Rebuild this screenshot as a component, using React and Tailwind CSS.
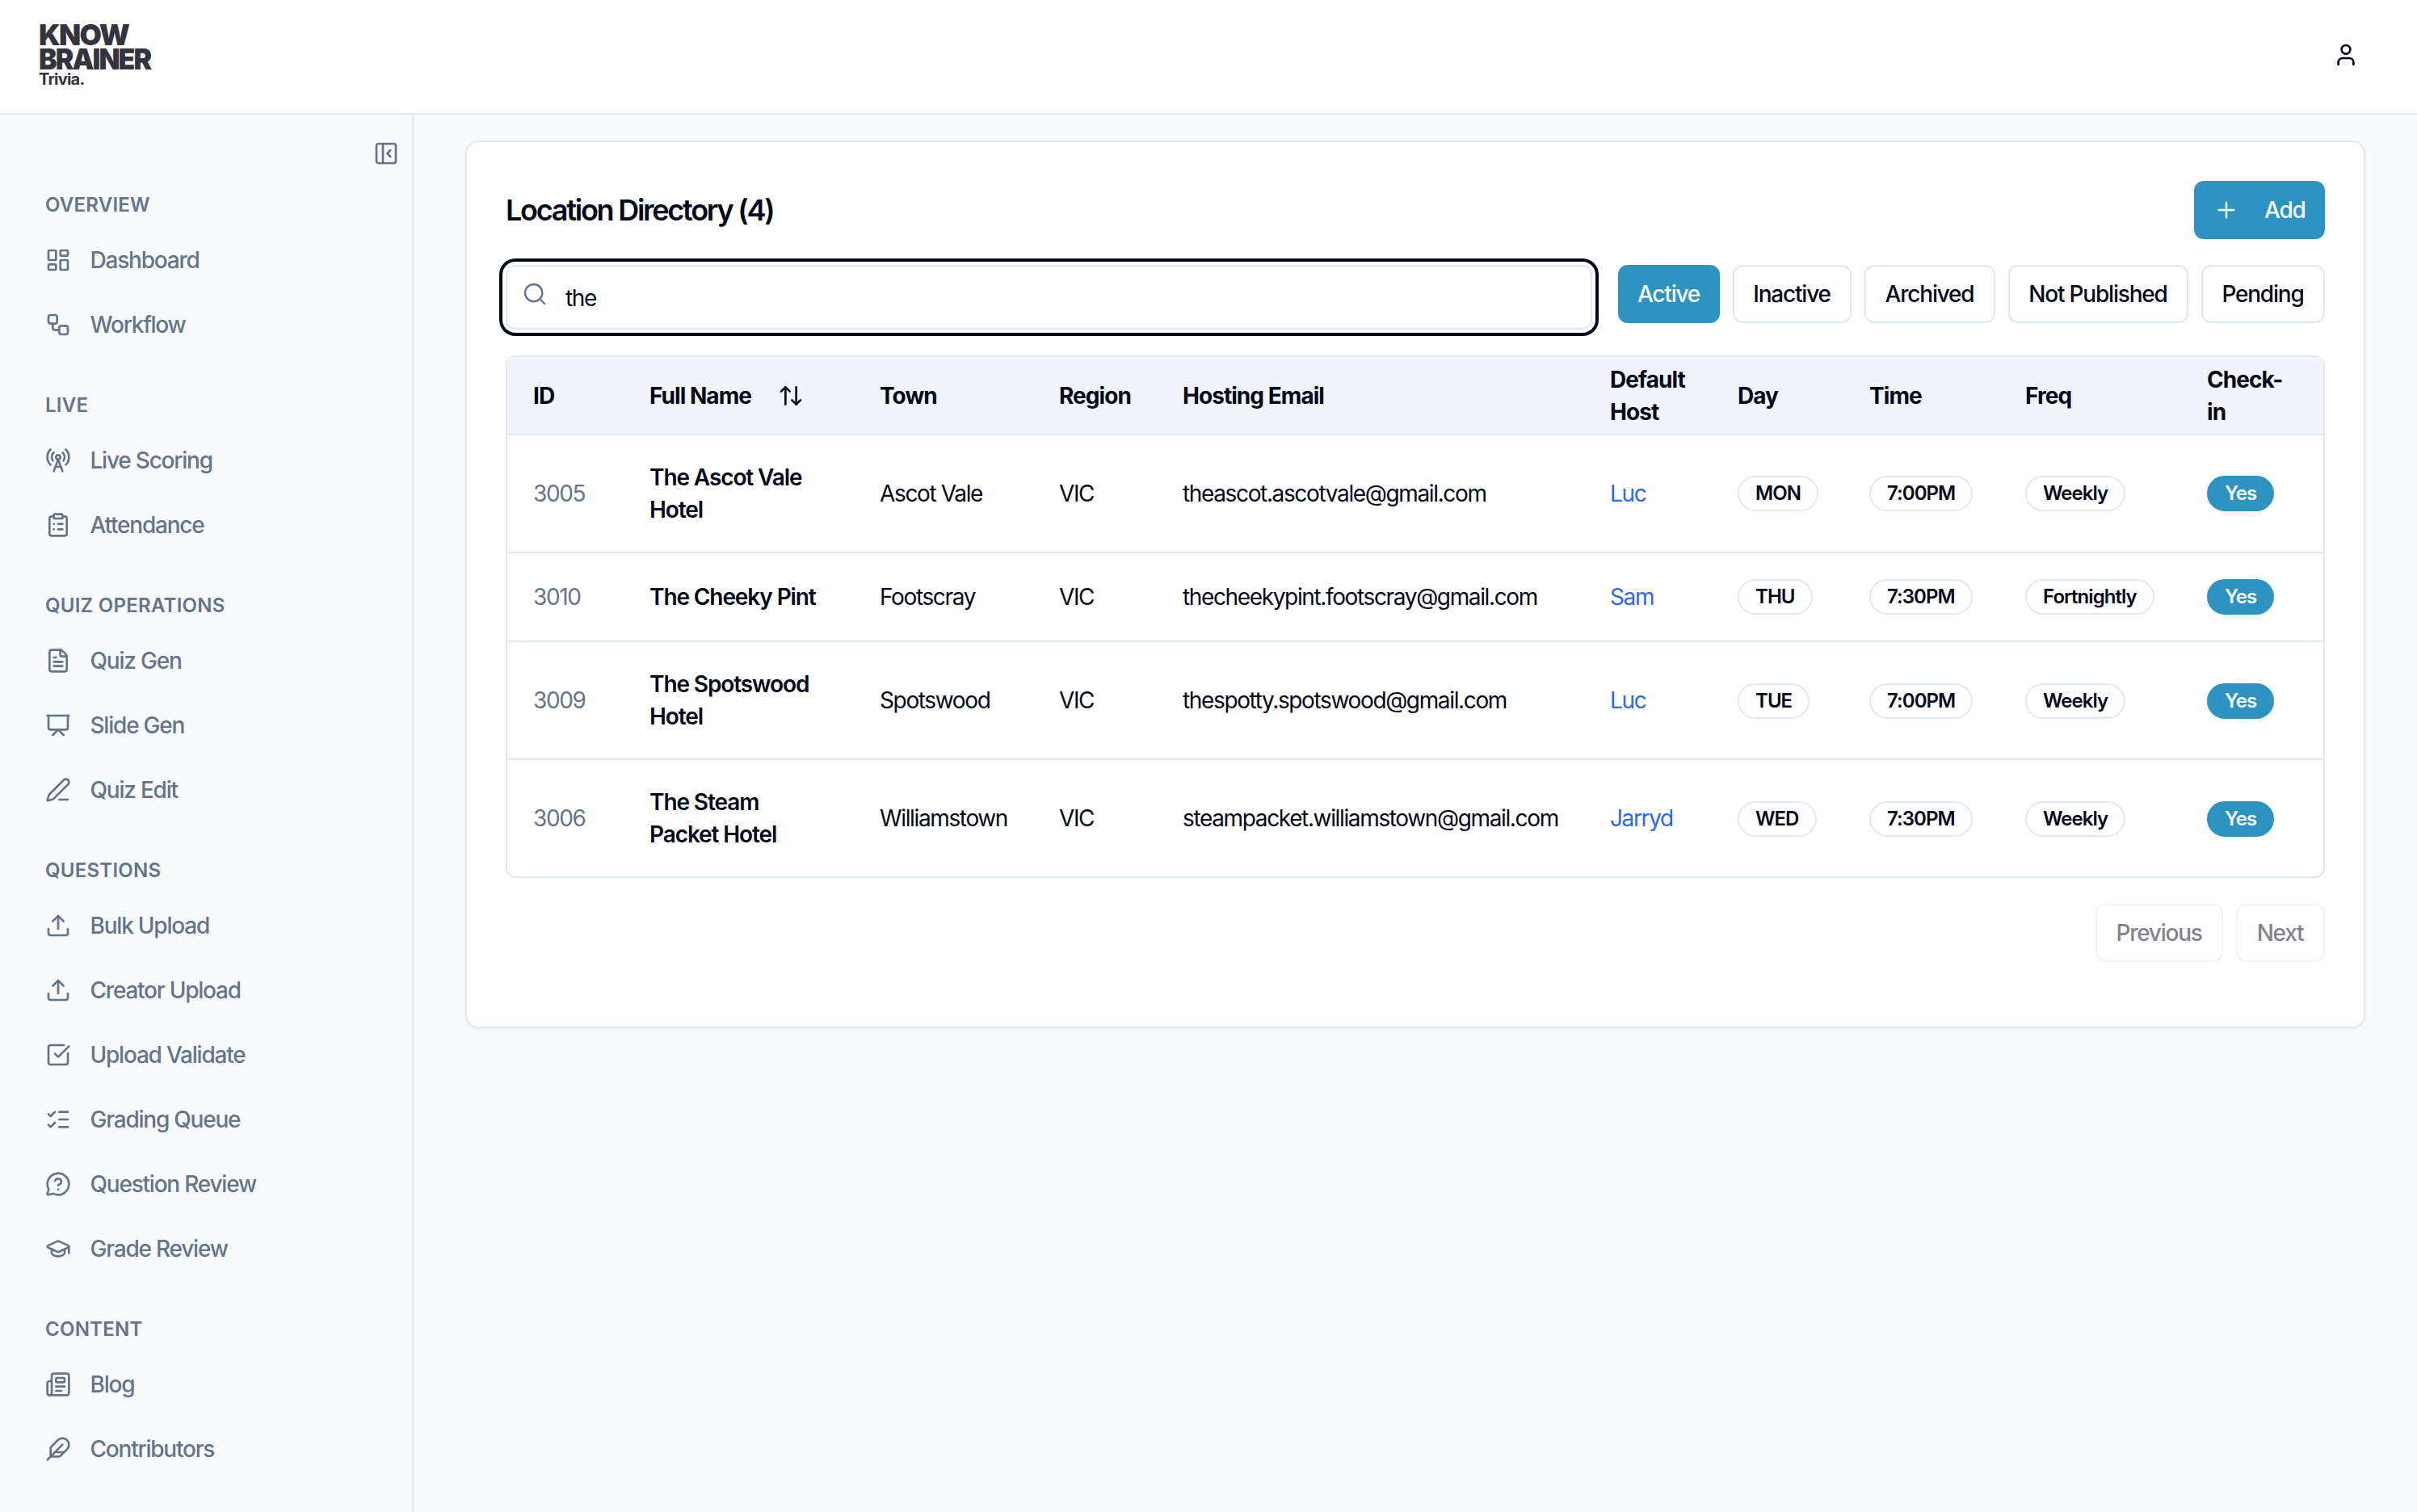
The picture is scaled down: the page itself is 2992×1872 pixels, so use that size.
import React, { useState } from 'react';
import {
  ArrowUpDown, ClipboardList, Feather, FileText, GraduationCap, LayoutDashboard, ListChecks,
  MessageCircleQuestionMark, Newspaper, PanelLeftClose, PenLine, Plus, Presentation, RadioTower,
  Search, SquareCheckBig, Upload, User, Workflow,
} from 'lucide-react';

const NAV = [
  { label: 'Overview', items: [
    { name: 'Dashboard', icon: LayoutDashboard },
    { name: 'Workflow', icon: Workflow },
  ] },
  { label: 'Live', items: [
    { name: 'Live Scoring', icon: RadioTower },
    { name: 'Attendance', icon: ClipboardList },
  ] },
  { label: 'Quiz Operations', items: [
    { name: 'Quiz Gen', icon: FileText },
    { name: 'Slide Gen', icon: Presentation },
    { name: 'Quiz Edit', icon: PenLine },
  ] },
  { label: 'Questions', items: [
    { name: 'Bulk Upload', icon: Upload },
    { name: 'Creator Upload', icon: Upload },
    { name: 'Upload Validate', icon: SquareCheckBig },
    { name: 'Grading Queue', icon: ListChecks },
    { name: 'Question Review', icon: MessageCircleQuestionMark },
    { name: 'Grade Review', icon: GraduationCap },
  ] },
  { label: 'Content', items: [
    { name: 'Blog', icon: Newspaper },
    { name: 'Contributors', icon: Feather },
  ] },
];

const FILTERS = [
  { name: 'Active', width: 'w-[126px]' },
  { name: 'Inactive', width: 'w-[147px]' },
  { name: 'Archived', width: 'w-[162px]' },
  { name: 'Not Published', width: 'w-[223px]' },
  { name: 'Pending', width: 'w-[153px]' },
];

const LOCATIONS = [
  { id: 3005, name: 'The Ascot Vale Hotel', town: 'Ascot Vale', email: 'theascot.ascotvale@gmail.com', host: 'Luc', day: 'MON', time: '7:00PM', freq: 'Weekly' },
  { id: 3010, name: 'The Cheeky Pint', town: 'Footscray', email: 'thecheekypint.footscray@gmail.com', host: 'Sam', day: 'THU', time: '7:30PM', freq: 'Fortnightly' },
  { id: 3009, name: 'The Spotswood Hotel', town: 'Spotswood', email: 'thespotty.spotswood@gmail.com', host: 'Luc', day: 'TUE', time: '7:00PM', freq: 'Weekly' },
  { id: 3006, name: 'The Steam Packet Hotel', town: 'Williamstown', email: 'steampacket.williamstown@gmail.com', host: 'Jarryd', day: 'WED', time: '7:30PM', freq: 'Weekly' },
];

function Logo() {
  return (
    <div className="pl-12 pt-7 text-[#34343e]">
      <div className="text-[36px] leading-[30px] font-black">
        <div className="origin-left scale-x-[0.98] tracking-[-1.7px]">KNOW</div>
        <div className="origin-left scale-x-[0.94] tracking-[-2px]">BRAINER</div>
      </div>
      <div className="text-[20px] leading-[20px] font-bold tracking-[-0.75px]">Trivia.</div>
    </div>
  );
}

function Sidebar() {
  return (
    <aside className="w-[512px] shrink-0 border-r-2 border-[#e2e8f0] text-[#64748b]">
      <div className="flex h-16 items-end justify-end pr-4">
        <PanelLeftClose size={32} />
      </div>
      {NAV.map(group => (
        <div key={group.label} className="px-4 pt-4 pb-4">
          <div className="flex h-16 items-center pl-10 text-2xl font-semibold uppercase tracking-[0.25px]">{group.label}</div>
          <ul className="flex flex-col gap-2">
            {group.items.map(({ name, icon: Icon }) => (
              <li key={name} className="flex h-18 items-center gap-[23.5px] pl-10 text-[28px] font-medium tracking-[-1.22px]">
                <Icon size={32} className="shrink-0" />
                <span>{name}</span>
              </li>
            ))}
          </ul>
        </div>
      ))}
    </aside>
  );
}

function Badge({ children, filled }) {
  return (
    <span className={`inline-flex h-11 items-center rounded-full border-2 px-5 align-middle text-2xl font-semibold tracking-[-0.95px] ${filled ? 'border-[#2d93c1] bg-[#2d93c1] text-[#f8fafc]' : 'border-[#e2e8f0]'}`}>
      {children}
    </span>
  );
}

function LocationTable() {
  return (
    <div className="mt-8 rounded-xl border-2 border-[#e2e8f0]">
      <table className="w-full table-fixed border-collapse text-left text-[28px] leading-10 tracking-[-1.36px]">
        <colgroup>
          <col className="w-[144px]" />
          <col className="w-[285px]" />
          <col className="w-[222px]" />
          <col className="w-[153px]" />
          <col className="w-[529px]" />
          <col className="w-[158px]" />
          <col className="w-[163px]" />
          <col className="w-[193px]" />
          <col className="w-[225px]" />
          <col className="w-[176px]" />
        </colgroup>
        <thead>
          <tr className="h-24 border-b-2 border-[#e2e8f0] bg-[#f1f5f9] tracking-[-0.95px] *:pl-8 *:font-bold">
            <th>ID</th>
            <th>
              <span className="flex items-center gap-[33px]">
                Full Name
                <ArrowUpDown size={32} />
              </span>
            </th>
            <th>Town</th>
            <th>Region</th>
            <th>Hosting Email</th>
            <th>Default<br />Host</th>
            <th>Day</th>
            <th>Time</th>
            <th>Freq</th>
            <th>Check-<br />in</th>
          </tr>
        </thead>
        <tbody>
          {LOCATIONS.map(loc => (
            <tr key={loc.id} className="border-b-2 border-[#e2e8f0] last:border-0 *:py-8 *:pl-8">
              <td className="text-[#64748b]">{loc.id}</td>
              <td className="pr-8 font-semibold tracking-[-1.1px]">{loc.name}</td>
              <td>{loc.town}</td>
              <td>VIC</td>
              <td>{loc.email}</td>
              <td className="text-[#2c67ec]">{loc.host}</td>
              <td><Badge>{loc.day}</Badge></td>
              <td><Badge>{loc.time}</Badge></td>
              <td><Badge>{loc.freq}</Badge></td>
              <td><Badge filled>Yes</Badge></td>
            </tr>
          ))}
        </tbody>
      </table>
    </div>
  );
}

export default function App() {
  const [query, setQuery] = useState('the');
  const [filter, setFilter] = useState('Active');

  return (
    <div className="flex h-[1872px] w-[2992px] flex-col overflow-hidden bg-[#f8fafc] font-[Inter,sans-serif] text-[#020817]">
      <header className="flex h-[142px] shrink-0 justify-between border-b-2 border-[#e2e8f0] bg-white">
        <Logo />
        <User size={32} className="mt-[52px] mr-18" />
      </header>

      <div className="flex min-h-0 flex-1">
        <Sidebar />
        <main className="flex-1 px-16 pt-8">
          <section className="h-[1099px] rounded-2xl border-2 border-[#e2e8f0] bg-white p-12 shadow-[0_2px_4px_rgba(0,0,0,0.05)]">
            <div className="flex h-18 items-center justify-between">
              <h1 className="text-[36px] leading-none font-semibold tracking-[-2.25px]">Location Directory (4)</h1>
              <button className="flex h-18 w-[162px] items-center gap-[31px] rounded-xl bg-[#2d93c1] px-6 text-[28px] font-medium tracking-[-1.2px] text-[#f8fafc]">
                <Plus size={32} strokeWidth={1.8} className="shrink-0" />
                Add
              </button>
            </div>

            <div className="mt-8 flex items-start gap-8">
              <div className="relative flex-1">
                <Search size={32} strokeWidth={1.8} className="absolute top-5 left-5 text-[#64748b]" />
                <input
                  value={query}
                  onChange={e => setQuery(e.target.value)}
                  className="block h-20 w-full rounded-xl border-2 border-[#e2e8f0] bg-white pt-px pl-18 text-[28px] tracking-[-1.4px] ring-4 ring-[#020817] ring-offset-4 outline-none"
                />
              </div>
              <div className="flex gap-4">
                {FILTERS.map(({ name, width }) => (
                  <button key={name} onClick={() => setFilter(name)}
                    className={`h-18 rounded-xl pr-px text-[28px] font-medium tracking-[-1.2px] whitespace-nowrap ${width} ${filter === name ? 'bg-[#2d93c1] text-[#f8fafc]' : 'border-2 border-[#e2e8f0] bg-white'}`}>
                    {name}
                  </button>
                ))}
              </div>
            </div>

            <LocationTable />

            <div className="mt-8 flex justify-end gap-4 text-[28px] font-medium tracking-[-1.25px]">
              <button disabled className="h-18 w-[158px] rounded-xl border-2 border-[#e2e8f0] pr-px opacity-50">Previous</button>
              <button disabled className="h-18 w-[110px] rounded-xl border-2 border-[#e2e8f0] pr-px opacity-50">Next</button>
            </div>
          </section>
        </main>
      </div>
    </div>
  );
}
